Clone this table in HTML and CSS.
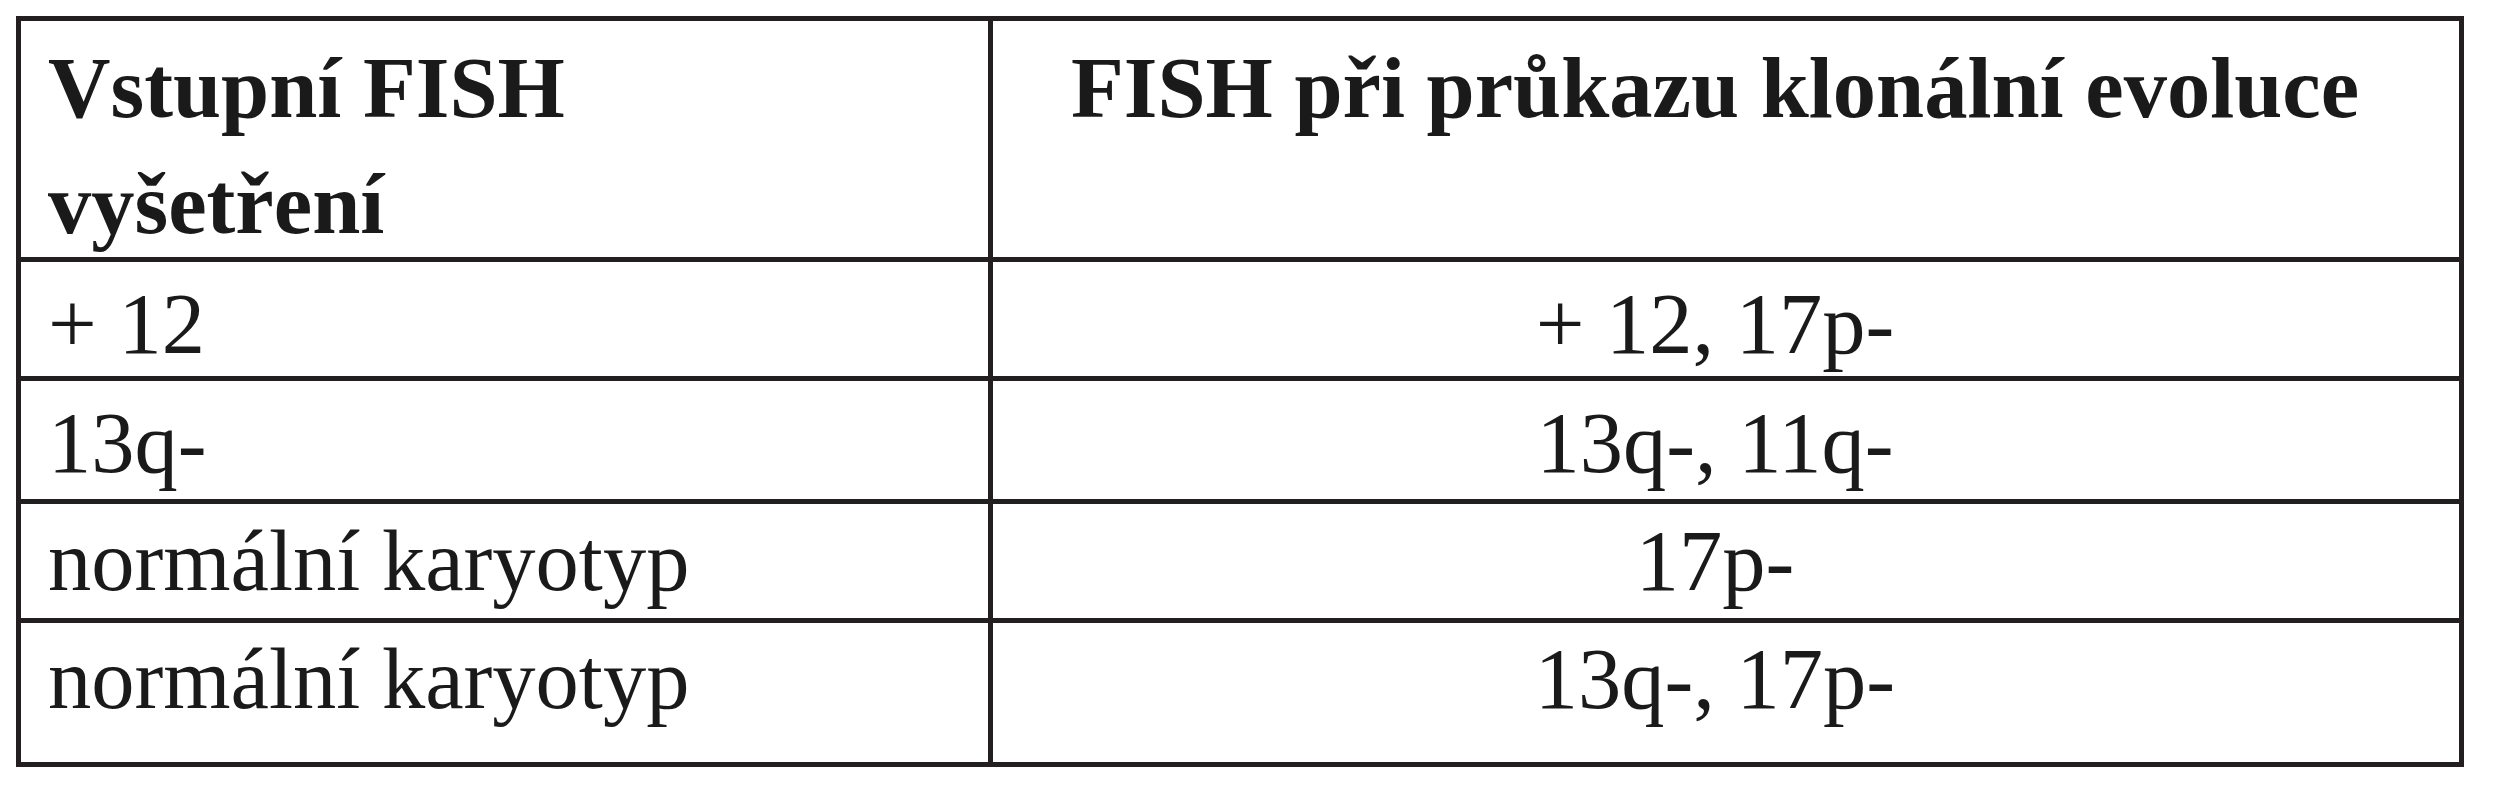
FILE: index.html
```html
<!DOCTYPE html>
<html lang="cs">
<head>
<meta charset="utf-8">
<title>FISH</title>
<link rel="stylesheet" href="styles.css">
</head>
<body>
<div class="page">
  <div class="table">
    <div class="cell head">Vstupní FISH<br>vyšetření</div>
    <div class="cell head center">FISH při průkazu klonální evoluce</div>
    <div class="cell r1">+ 12</div>
    <div class="cell r1 center">+ 12, 17p-</div>
    <div class="cell r2">13q-</div>
    <div class="cell r2 center">13q-, 11q-</div>
    <div class="cell r3">normální karyotyp</div>
    <div class="cell r3 center">17p-</div>
    <div class="cell r4">normální karyotyp</div>
    <div class="cell r4 center">13q-, 17p-</div>
  </div>
</div>
</body>
</html>
```

FILE: styles.css
```css
html, body {
  margin: 0;
  padding: 0;
  background: #ffffff;
}

.page {
  padding: 16px;
}

.table {
  display: grid;
  grid-template-columns: 967px 1466px;
  grid-template-rows: 236px 114px 118px 114px 139px;
  gap: 5px;
  width: max-content;
  background: #231f20;
  border: 5px solid #231f20;
}

.cell {
  background: #ffffff;
  color: #1a1a1a;
  font-family: "Liberation Serif", "Times New Roman", serif;
  font-size: 86.5px;
  line-height: 96px;
  padding: 0 20px 0 27px;
  white-space: nowrap;
}

.center {
  text-align: center;
  padding: 0 38px 0 16px;
}

.head {
  font-weight: bold;
  line-height: 116px;
  padding-top: 9px;
}

.r1, .r2 {
  padding-top: 14px;
}

.r3 {
  padding-top: 9px;
}

.r4 {
  padding-top: 8px;
}
```
